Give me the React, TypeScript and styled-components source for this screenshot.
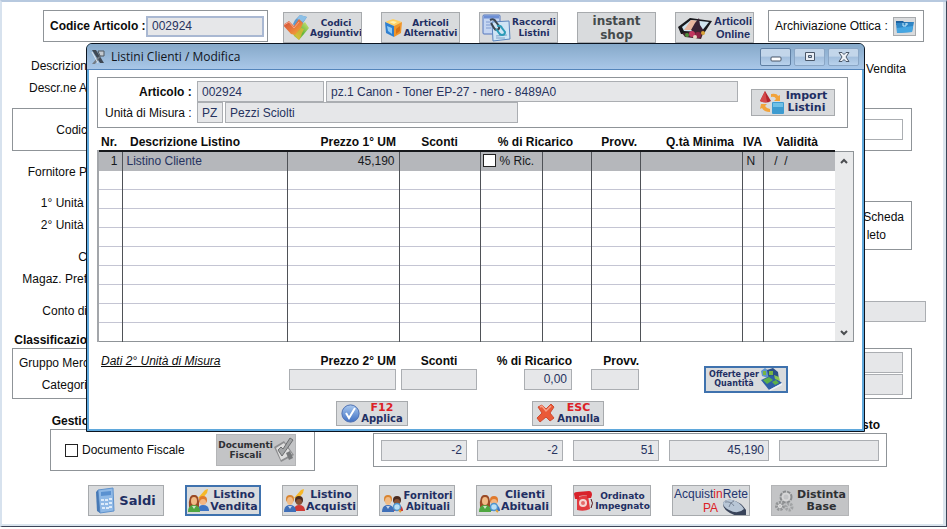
import React from "react";
import styled, { createGlobalStyle, css } from "styled-components";

const GlobalStyle = createGlobalStyle`
  * { box-sizing: border-box; }
  body {
    margin: 0;
    background: #fff;
    color: #0c0c0c;
    font: 12px/16px "Liberation Sans", Arial, sans-serif;
  }
  button, input { font: inherit; color: inherit; }
`;

/* ---------- shared parts ---------- */

const Frame = styled.main`
  position: relative;
  background: #fff;
  border-style: solid;
  border-width: 2px 1px 1px 2px;
  border-color: #b7c9df #3c4558 #3c4558 #d7e2ee;
  box-shadow: inset -3px -2px 0 #dbe5ee;
  overflow: hidden;
`;

const Field = styled.input<{ $w?: number; $grow?: boolean; $right?: boolean; $white?: boolean; $focus?: boolean }>`
  width: ${(p) => (p.$w ? `${p.$w}px` : "auto")};
  flex: ${(p) => (p.$grow ? "1 1 0" : "none")};
  min-width: 0;
  height: 21px;
  padding: 0 4px;
  border: ${(p) => (p.$focus ? "2px solid #a9b8d2" : "1px solid #abaeb2")};
  border-radius: 0;
  background: ${(p) => (p.$white ? "#fff" : "#e6e7e9")};
  color: #26335f;
  text-align: ${(p) => (p.$right ? "right" : "left")};
  outline: none;
`;

const Tick = styled.input`
  appearance: none;
  flex: none;
  width: 13px;
  height: 13px;
  margin: 0;
  border: 1px solid #222;
  background: #fff;
`;

const Panel = styled.div`
  border: 1px solid #8f9498;
`;

const Strong = styled.strong`
  font-weight: bold;
  white-space: nowrap;
`;

/* ---------- picture buttons ---------- */

const PictureButton = styled.button<{ $w: number; $h?: number; $tone?: "active" | "off" }>`
  display: flex;
  flex: none;
  align-items: center;
  justify-content: center;
  gap: 1px;
  width: ${(p) => p.$w}px;
  height: ${(p) => p.$h ?? 31}px;
  padding: 0;
  border: 1px solid #a7aaad;
  background: #d9dbdd;
  color: #1f2f63;
  overflow: hidden;
  white-space: nowrap;
  ${(p) => p.$tone === "active" && css`border: 2px solid #3f72ae;`}
  ${(p) => p.$tone === "off" && css`background: #c3c4c6; border-color: #b4b5b7; color: #2e3034;`}
  svg { flex: none; display: block; }
`;

const Caption = styled.span<{ $size: number; $lh?: number; $arial?: boolean }>`
  display: flex;
  flex-direction: column;
  align-items: center;
  font: bold ${(p) => p.$size}px/${(p) => p.$lh ?? p.$size + 1}px
    ${(p) => (p.$arial ? `"Liberation Sans", Arial` : `"DejaVu Sans", Verdana`)}, sans-serif;
`;

const Red = styled.span<{ $size?: number }>`
  color: #dc2127;
  font-size: ${(p) => (p.$size ? `${p.$size}px` : "inherit")};
`;

const ShopCaption = styled(Caption)`
  color: #454b4c;
`;

const SaldiLabel = styled(Caption)`
  padding-left: 3px;
`;

const RetePA = styled.span`
  display: flex;
  flex-direction: column;
  align-items: center;
  font: 12px/14px "Liberation Sans", Arial, sans-serif;
  color: #23356f;
`;

const ReteLine = styled.span`
  display: flex;
  align-items: center;
  gap: 4px;
  height: 14px;
  padding-left: 28px;
`;

/* ---------- icons ---------- */

const ChecksIcon = () => (
  <svg width="26" height="27" viewBox="0 0 26 27" aria-hidden="true">
    <defs>
      <linearGradient id="ck1" x1="0" y1="0" x2="1" y2="1">
        <stop offset="0" stopColor="#c74a3c" /><stop offset=".5" stopColor="#e8743c" /><stop offset="1" stopColor="#f2b632" />
      </linearGradient>
      <linearGradient id="ck2" x1="1" y1="0" x2="0" y2="1">
        <stop offset="0" stopColor="#d6e67a" /><stop offset=".5" stopColor="#62b53b" /><stop offset="1" stopColor="#e0d23a" />
      </linearGradient>
    </defs>
    <path d="M12 6 L17 1 L24 3 L20 9 L22 12 L14 16 L10 10Z" fill="#5b9bd0" />
    <path d="M17 1 L24 3 L20 8 L14 5Z" fill="#8dc0e6" />
    <path d="M8 14 L14 15 L22 8 L26 14 L16 26 L11 22Z" fill="url(#ck2)" />
    <path d="M0 11 L6 7 L11 12 L16 5 L20 9 L18 14 L12 21 L8 20Z" fill="url(#ck1)" />
    <path d="M1 11 L6 8 L11 14 L16 8" fill="none" stroke="#f4a68a" strokeWidth="1" />
    <path d="M12 21 L18 14 L21 15 L16 26Z" fill="#f0b632" opacity=".7" />
  </svg>
);

const CubeIcon = () => (
  <svg width="19" height="20" viewBox="0 0 19 20" aria-hidden="true">
    <path d="M1 4 L9 1 L18 4 L10 8Z" fill="#ffcf62" />
    <path d="M1 4 L10 8 L10 19 L2 15Z" fill="#2f7fd0" />
    <path d="M10 8 L18 4 L17 15 L10 19Z" fill="#f0962a" />
    <path d="M3 8 L8 10 L8 16 L4 13Z" fill="#8fcbf5" />
    <path d="M12 11 L16 8 L16 13 L12 16Z" fill="#d97316" />
    <path d="M5 4 L9 3 L13 4 L10 6Z" fill="#fff0b0" />
  </svg>
);

const LinkPagesIcon = () => (
  <svg width="30" height="28" viewBox="0 0 30 28" aria-hidden="true">
    <rect x="2" y="1" width="17" height="19" rx="1" fill="#c5d6f2" stroke="#5476bd" />
    <path d="M3 3h15" stroke="#6d8fd4" strokeWidth="3" />
    <path d="M5 8h5M5 11h5M5 14h5" stroke="#7f9ad0" />
    <path d="M11 8 L28 7 L29 25 L12 27Z" fill="#cfe5f5" stroke="#5b86bf" />
    <path d="M15 22 L26 21 M15 24h9" stroke="#7fa3c9" />
    <path d="M9 6 q4-2 6 2 l3 4 q1 3-2 4 q-2 0-3-2 l-3-5" fill="none" stroke="#3b4550" strokeWidth="2" />
    <path d="M16 12 q4-1 5 2 l3 4 q0 3-3 3 q-2 0-3-2 l-3-4" fill="none" stroke="#2c9cb8" strokeWidth="2" />
  </svg>
);

const TabletIcon = () => (
  <svg width="36" height="24" viewBox="0 0 36 24" aria-hidden="true">
    <path d="M1 11 L13 2 L35 5 L26 19 L4 18Z" fill="#17181c" />
    <path d="M5 11 L14 4 L32 6 L24 16 L7 15Z" fill="#cfe3ee" />
    <path d="M14 4 L22 5 L18 14 L7 14Z" fill="#e9b59e" />
    <path d="M18 7 L22 2 L23 9 L27 15 L20 19 L14 14Z" fill="#3a2234" />
    <path d="M5 17 L27 15 L24 23 L8 21Z" fill="#46252e" />
    <circle cx="15" cy="18" r="3" fill="#c2355f" />
    <circle cx="21" cy="19" r="3" fill="#8e2245" />
    <circle cx="10" cy="19" r="2" fill="#4f8f3c" />
    <circle cx="26" cy="17" r="2" fill="#d8a33b" />
    <circle cx="18" cy="21" r="2" fill="#e7d7c4" />
  </svg>
);

const FolderIcon = () => (
  <svg width="18" height="13" viewBox="0 0 18 13" aria-hidden="true">
    <path d="M0 1h7l1 1h9v3H0Z" fill="#1d5f9c" />
    <path d="M0 3 L18 2 L16 12 L1 13Z" fill="#2f86c6" />
    <path d="M1 8 L17 6 L16 12 L1 13Z" fill="#45a6e2" />
    <path d="M7 3v3h3V3M11 3v2" stroke="#c9ebfb" strokeWidth="1" fill="none" />
  </svg>
);

const ShapesIcon = () => (
  <svg width="26" height="24" viewBox="0 0 26 24" aria-hidden="true">
    <path d="M6 1 L12 11 Q7 14 1 11Z" fill="#b3242c" />
    <path d="M6 1 L8 12 Q4 13 1 11Z" fill="#d4484a" />
    <path d="M12 4 q6-1 7 2 l2-1 v6 h-6 l2-2 q-1-3-5-2Z" fill="#f2a33a" />
    <path d="M2 14 l6 0 -2 2 q2 3 5 3 v3 q-6 0-8-4 l-2 1Z" fill="#f2a33a" />
    <rect x="13" y="12" width="12" height="12" rx="1" fill="#3d9bd0" />
    <rect x="14" y="13" width="10" height="4" fill="#6fc0e6" />
  </svg>
);

const OfferIcon = () => (
  <svg width="23" height="23" viewBox="0 0 23 23" aria-hidden="true">
    <path d="M1 3 L5 0 L9 3 L8 10 L2 8Z" fill="#5e95cd" />
    <path d="M7 2 L13 0 L18 4 L19 12 L9 12Z" fill="#2a4f86" />
    <path d="M1 12 L12 7 L22 15 L9 22Z" fill="#2e5fa6" />
    <path d="M9 3h4v4H9ZM3 3h3v4H3Z" fill="#77b543" />
    <path d="M3 12 l6-3 4 3-6 4Z" fill="#5cb04a" />
    <path d="M14 7 l5 2 1 4-5-2Z" fill="#8ac653" />
    <path d="M12 14 l4-2 3 3-4 2Z" fill="#5cb04a" />
    <path d="M9 22 L22 15 v2 L10 23Z" fill="#eef3f8" />
  </svg>
);

const OkIcon = () => (
  <svg width="19" height="19" viewBox="0 0 19 19" aria-hidden="true">
    <defs>
      <linearGradient id="ok" x1="0" y1="0" x2="0" y2="1">
        <stop offset="0" stopColor="#a9c9f0" /><stop offset="1" stopColor="#3f6fc2" />
      </linearGradient>
    </defs>
    <circle cx="9.5" cy="9.5" r="8.6" fill="url(#ok)" stroke="#4d70b4" />
    <path d="M5 9 L8 14 L14 4" fill="none" stroke="#fff" strokeWidth="2" />
  </svg>
);

const CrossIcon = () => (
  <svg width="20" height="20" viewBox="0 0 20 20" aria-hidden="true">
    <path d="M2 4 L6 2 L10 6 L15 1 L18 4 L14 10 L18 15 L14 18 L10 14 L4 19 L1 15 L6 10Z" fill="#ea5a38" stroke="#cf4a30" />
    <path d="M4 4 L6 3 L10 8 L15 3" fill="none" stroke="#f7a088" strokeWidth="1.5" />
  </svg>
);

const StampIcon = () => (
  <svg width="20" height="26" viewBox="0 0 20 26" aria-hidden="true">
    <path d="M0 10 L10 4 L20 18 L7 25Z" fill="#8d8e90" />
    <path d="M2 11 L10 6 L18 17 L7 23Z" fill="#dedede" />
    <path d="M4 13 L8 19 L19 3 L16 1 L9 12 L7 10Z" fill="#a3a5a7" stroke="#6c6e70" />
    <path d="M12 16 l4-2 3 7 -4 2Z" fill="#77797b" />
  </svg>
);

const CalculatorIcon = () => (
  <svg width="19" height="27" viewBox="0 0 19 27" aria-hidden="true">
    <path d="M2 3 L17 1 L18 24 L4 26Z" fill="#8fb9e6" stroke="#5f92cc" />
    <path d="M2 3 L4 26 L1 24 L0 5Z" fill="#4779b5" />
    <path d="M5 5 L15 4 L15 8 L5 9Z" fill="#5a91d0" />
    <g fill="#dcebfa">
      <rect x="5" y="12" width="3" height="2" /><rect x="9" y="12" width="3" height="2" /><rect x="13" y="11" width="3" height="2" />
      <rect x="5" y="16" width="3" height="2" /><rect x="9" y="16" width="3" height="2" /><rect x="13" y="15" width="3" height="2" />
      <rect x="6" y="20" width="3" height="2" /><rect x="10" y="20" width="3" height="2" /><rect x="13" y="19" width="3" height="2" />
    </g>
  </svg>
);

type PeopleProps = { woman?: boolean; extra: "pencil" | "lens" };

const PeopleIcon = ({ woman, extra }: PeopleProps) => {
  const hair = woman ? "#9a4a26" : "#d98430";
  const body = woman ? "#4fa640" : "#3f6fb8";
  const hair2 = woman ? "#e07a2d" : "#4a2b20";
  const body2 = woman ? "#3d74c4" : "#cf3a35";
  const skin2 = woman ? "#f3b682" : "#8a5334";
  return (
    <svg width="21" height="24" viewBox="0 0 21 24" aria-hidden="true">
      {extra === "pencil" && <path d="M10 9 L17 1 L20 0 L19 4 L14 10Z" fill="#f6b829" />}
      <path d="M10 22 q0-6 5-6 q6 0 6 6Z" fill={body2} />
      <circle cx="15" cy="11" r="4" fill={hair2} />
      <ellipse cx="15" cy="13" rx="3" ry="3" fill={skin2} />
      {woman && <path d="M1 18 Q0 6 6 6 Q12 6 11 18Z" fill={hair} />}
      <path d="M0 23 q0-7 6-7 q6 0 6 7Z" fill={body} />
      <circle cx="6" cy="10" r="4" fill={hair} />
      <ellipse cx="6" cy="12" rx="3" ry="4" fill="#f1bb85" />
      <path d="M4 17 l2 3 2-3" fill="#fff" opacity=".7" />
      {extra === "lens" && (
        <>
          <circle cx="15" cy="18" r="3.5" fill="#b9dff5" stroke="#4d94cf" strokeWidth="1.5" />
          <path d="M17 21 l2 2" stroke="#e0a33b" strokeWidth="2" />
        </>
      )}
    </svg>
  );
};

const PhoneIcon = () => (
  <svg width="20" height="22" viewBox="0 0 20 22" aria-hidden="true">
    <path d="M3 7 L14 5 L16 19 Q10 22 3 20Z" fill="#e23a3f" />
    <path d="M0 4 Q0 2 3 2 L15 1 Q18 1 18 5 L17 8 L13 8 L13 5 L5 6 L5 9 L1 9Z" fill="#d8222b" />
    <circle cx="9" cy="13" r="4" fill="#f5d6d4" />
    <circle cx="9" cy="13" r="2" fill="#e46a6a" />
    <path d="M17 9 q3 4 0 9" fill="none" stroke="#5c1a1d" />
  </svg>
);

const MouseIcon = () => (
  <svg width="25" height="18" viewBox="0 0 25 18" aria-hidden="true">
    <path d="M1 5 Q2 0 10 1 Q19 3 24 11 L24 17 Q12 18 5 12 Q1 9 1 5Z" fill="#39445a" />
    <path d="M1 4 Q3 0 10 1 Q18 3 22 10 Q16 16 7 11 Q1 8 1 4Z" fill="#b8c6d6" />
    <path d="M3 3 Q9 2 12 7 M12 2 Q8 3 7 8" fill="none" stroke="#7b8798" />
  </svg>
);

const GearsIcon = () => (
  <svg width="22" height="22" viewBox="0 0 22 22" aria-hidden="true" fill="none">
    <circle cx="12" cy="7" r="5" stroke="#898b8d" strokeWidth="3" strokeDasharray="3 1" />
    <circle cx="12" cy="7" r="3.5" stroke="#d6d6d7" strokeWidth="2" />
    <circle cx="6" cy="16" r="3.5" stroke="#929496" strokeWidth="3" strokeDasharray="2 1" />
    <circle cx="15" cy="17" r="3" stroke="#a1a3a5" strokeWidth="3" strokeDasharray="2 1" />
    <circle cx="6" cy="16" r="1.5" stroke="#dedede" />
  </svg>
);

const AppIcon = () => (
  <svg width="15" height="16" viewBox="0 0 15 16" aria-hidden="true">
    <path d="M1 1h4l8 13h-4Z" fill="#3f4854" />
    <path d="M10 7 L4 15 H1 L7 8Z" fill="#737c86" />
    <path d="M7 2h6v5H9Z" fill="#c2c9d0" stroke="#4e5863" />
    <path d="M1 3l6 11" stroke="#dfe5ea" />
  </svg>
);

const MinIcon = () => (
  <svg width="12" height="12" viewBox="0 0 12 12" aria-hidden="true">
    <rect x="1" y="6" width="10" height="4" rx="1" fill="#fff" stroke="#4a5768" />
  </svg>
);
const MaxIcon = () => (
  <svg width="12" height="12" viewBox="0 0 12 12" aria-hidden="true">
    <path d="M1.5 1.5h9v8h-9Z M4.5 4.5h3v2h-3Z" fill="#e9eef5" fillRule="evenodd" stroke="#4a5768" />
  </svg>
);
const CloseIcon = () => (
  <svg width="12" height="12" viewBox="0 0 12 12" aria-hidden="true">
    <path d="M1 1.5h3l2 2 2-2h3L8 6l3 4.5H8L6 8.5 4 10.5H1L4 6Z" fill="#eef2f7" stroke="#4a5768" />
  </svg>
);
const Chevron = ({ down }: { down?: boolean }) => (
  <svg width="8" height="6" viewBox="0 0 8 6" aria-hidden="true">
    <path d={down ? "M1 1l3 3 3-3" : "M1 5l3-3 3 3"} fill="none" stroke="#4b4d50" strokeWidth="2" />
  </svg>
);

/* ---------- article form ---------- */

const TopRow = styled.header`
  display: flex;
  align-items: flex-start;
  padding: 8px 22px 0 41px;
`;

const CodePanel = styled(Panel)`
  display: flex;
  align-items: center;
  justify-content: space-between;
  width: 225px;
  height: 32px;
  padding: 0 3px 0 6px;
`;

const TopButtons = styled.div`
  display: flex;
  flex: 1;
  justify-content: space-between;
  margin: 2px 14px 0 15px;
`;

const ArchivePanel = styled(Panel)`
  display: flex;
  align-items: center;
  justify-content: space-between;
  width: 156px;
  height: 32px;
  padding: 0 7px 0 6px;
`;

const Line = styled.div<{ $top?: number; $right?: number }>`
  display: flex;
  align-items: center;
  justify-content: space-between;
  height: 22px;
  margin-top: ${(p) => p.$top ?? 0}px;
  padding-right: ${(p) => p.$right ?? 0}px;
`;

const Label = styled.label<{ $w?: number; $bold?: boolean }>`
  flex: none;
  width: ${(p) => p.$w ?? 85}px;
  overflow: hidden;
  white-space: pre;
  text-align: right;
  font-weight: ${(p) => (p.$bold ? "bold" : "normal")};
`;

const LowText = styled.span`
  align-self: flex-end;
`;

const WidePanel = styled(Panel)<{ $top?: number }>`
  display: flex;
  flex-direction: column;
  gap: 1px;
  margin: ${(p) => p.$top ?? 0}px 34px 0 10px;
  padding: 3px 8px 3px 0;
`;

const PanelLine = styled.div<{ $tall?: boolean }>`
  display: flex;
  align-items: center;
  justify-content: space-between;
  padding: ${(p) => (p.$tall ? "7px 0" : "0")};
`;

const Split = styled.div`
  display: flex;
  align-items: flex-start;
  justify-content: space-between;
  margin-top: 9px;
  padding-right: 34px;
`;

const LabelStack = styled.div`
  display: flex;
  flex-direction: column;
  line-height: 22px;
`;

const Spacer = styled.div`
  height: 10px;
`;

const CardPanel = styled(Panel)`
  display: flex;
  flex-direction: column;
  margin-top: 9px;
  padding: 6px 7px 5px 0;
  border-left: 0;
  line-height: 18px;
  white-space: pre;
`;

const Heading = styled.div<{ $top?: number }>`
  display: flex;
  margin-top: ${(p) => p.$top ?? 0}px;
  line-height: 15px;
`;

const TaxRow = styled.div`
  display: flex;
  align-items: flex-start;
  gap: 58px;
  margin-top: 15px;
  padding: 0 59px 0 48px;
`;

const TaxBlock = styled.div`
  width: 265px;
  line-height: 15px;
`;

const TaxPanel = styled(Panel)`
  display: flex;
  align-items: center;
  justify-content: space-between;
  height: 42px;
  padding: 0 18px 0 14px;
`;

const CheckLabel = styled.label`
  display: flex;
  align-items: center;
  gap: 4px;
`;

const TotalsBlock = styled.div`
  flex: 1;
  margin-top: 4px;
  line-height: 15px;
  text-align: right;
`;

const TotalsPanel = styled(Panel)`
  display: flex;
  align-items: center;
  gap: 10px;
  height: 34px;
  padding: 0 7px;
`;

const TotalsTitle = styled.div`
  padding-right: 7px;
`;

const BottomRow = styled.footer`
  display: flex;
  gap: 21px;
  padding: 14px 0 10px 86px;
`;

/* ---------- dialog ---------- */

const Dialog = styled.section`
  position: absolute;
  top: 41px;
  left: 84px;
  right: 81px;
  border: 1px solid #0b1420;
  border-radius: 6px 6px 0 0;
  background: #5fa8dc;
  padding: 0 2px 2px;
  overflow: hidden;
`;

const TitleBar = styled.div`
  display: flex;
  align-items: center;
  gap: 5px;
  height: 26px;
  margin: 0 -2px;
  padding: 0 5px 0 4px;
  border-bottom: 1px solid #5485bb;
  background: linear-gradient(#86a9c9, #a9c7e8);
  color: #10151c;
`;

const Title = styled.h1`
  flex: 1;
  margin: 0;
  font: normal 12px/18px "Open Sans", "Noto Sans", sans-serif;
`;

const WindowButton = styled.button<{ $strong?: boolean }>`
  display: grid;
  place-items: center;
  width: 31px;
  height: 18px;
  padding: 0;
  border: 1px solid ${(p) => (p.$strong ? "#5f7fa3" : "#8aa6c5")};
  border-radius: 2px;
  background: linear-gradient(#c3d6ea 45%, #a3bfdd 50%, #b9d2ec);
`;

const WindowButtons = styled.div`
  display: flex;
  gap: 3px;
`;

const DialogBody = styled.div`
  padding: 7px 8px 3px;
  background: #fff;
`;

const ArticlePanel = styled(Panel)`
  display: flex;
  align-items: center;
  gap: 13px;
  margin-right: 6px;
  padding: 3px 12px 4px 3px;
`;

const ArticleLines = styled.div`
  flex: 1;
`;

const ArticleLine = styled.div`
  display: flex;
  align-items: center;
  gap: 2px;
`;

const ListArea = styled.div`
  display: flex;
  margin-top: 5px;
`;

const Table = styled.table`
  flex: 1;
  width: 0;
  table-layout: fixed;
  border-collapse: collapse;
`;

const HeadCell = styled.th<{ $align?: string; $pad?: string }>`
  height: 18px;
  padding: ${(p) => p.$pad ?? "0"};
  text-align: ${(p) => p.$align ?? "center"};
  font-weight: bold;
  line-height: 16px;
  white-space: nowrap;
`;

const Row = styled.tr<{ $selected?: boolean }>`
  height: 19px;
  background: ${(p) => (p.$selected ? "#b5b7bb" : "#fff")};
  border-bottom: 1px solid #c4c5d3;
  &:first-child { border-top: 2px solid #16181b; border-bottom-color: #b5b7bb; }
  &:last-child { border-bottom-color: #8f9498; }
`;

const Cell = styled.td<{ $align?: string }>`
  padding: 0 4px;
  border-right: 1px solid #4f5257;
  text-align: ${(p) => p.$align ?? "left"};
  line-height: 16px;
  white-space: pre;
  color: #17191d;
  &:first-child { border-left: 2px solid #a3a6aa; }
  &:last-child { border-right: 0; }
`;

const ItemName = styled.span`
  color: #26335f;
`;

const RicLabel = styled.label`
  display: flex;
  align-items: center;
  gap: 4px;
  margin-left: -2px;
`;

const ScrollBar = styled.div`
  display: flex;
  flex-direction: column;
  align-items: center;
  justify-content: space-between;
  width: 19px;
  margin-top: 18px;
  padding: 6px 0 5px;
  border: 1px solid #8f9498;
  border-left: 0;
  background: #e9eaeb;
`;

const SecondUnit = styled.div`
  display: grid;
  grid-template-columns: 187px 107px 76px 90px 62px auto;
  column-gap: 5px;
  margin-top: 11px;
`;

const SecondTitle = styled.em`
  padding-left: 4px;
  font-style: italic;
  text-decoration: underline;
`;

const Stack = styled.label<{ $align?: string }>`
  display: flex;
  flex-direction: column;
  align-items: ${(p) => p.$align ?? "flex-end"};
  font-weight: bold;
  input { font-weight: normal; }
`;

const OfferSlot = styled.div`
  display: flex;
  align-items: flex-end;
  margin: 0 0 -3px 60px;
`;

const Actions = styled.div`
  display: flex;
  gap: 124px;
  padding: 11px 0 0 239px;
`;

const columns = [24, 165, 112, 81, 62, 49, 49, 102, 21];
const emptyRows = Array.from({ length: 9 }, (_, i) => i);
const totals = [
  { w: 86, v: "-2" },
  { w: 86, v: "-2" },
  { w: 86, v: "51" },
  { w: 100, v: "45,190" },
  { w: 100, v: "" },
];

const PriceListDialog = () => (
  <Dialog role="dialog" aria-labelledby="dlg-title">
    <TitleBar>
      <AppIcon />
      <Title id="dlg-title">Listini Clienti / Modifica</Title>
      <WindowButtons>
        <WindowButton $strong aria-label="Riduci"><MinIcon /></WindowButton>
        <WindowButton aria-label="Ingrandisci"><MaxIcon /></WindowButton>
        <WindowButton aria-label="Chiudi"><CloseIcon /></WindowButton>
      </WindowButtons>
    </TitleBar>
    <DialogBody>
      <ArticlePanel>
        <ArticleLines>
          <ArticleLine>
            <Label $w={94} $bold htmlFor="art">Articolo : </Label>
            <Field id="art" $w={127} readOnly defaultValue="002924" />
            <Field aria-label="Descrizione articolo" $grow readOnly defaultValue="pz.1 Canon - Toner EP-27 - nero - 8489A0" />
          </ArticleLine>
          <ArticleLine>
            <Label $w={94} htmlFor="um">Unità di Misura : </Label>
            <Field id="um" $w={26} readOnly defaultValue="PZ" />
            <Field aria-label="Descrizione unità" $w={293} readOnly defaultValue="Pezzi Sciolti" />
          </ArticleLine>
        </ArticleLines>
        <PictureButton $w={84} $h={27}>
          <ShapesIcon />
          <Caption $size={11}><span>Import</span><span>Listini</span></Caption>
        </PictureButton>
      </ArticlePanel>

      <ListArea>
        <Table>
          <colgroup>
            {columns.map((w, i) => <col key={i} width={w} />)}
            <col />
          </colgroup>
          <thead>
            <tr>
              <HeadCell $align="left" $pad="0 0 0 3px">Nr.</HeadCell>
              <HeadCell $align="left" $pad="0 0 0 8px">Descrizione Listino</HeadCell>
              <HeadCell $align="right" $pad="0 3px 0 0">Prezzo 1° UM</HeadCell>
              <HeadCell>Sconti</HeadCell>
              <HeadCell colSpan={2}>% di Ricarico</HeadCell>
              <HeadCell $align="right" $pad="0 3px 0 0">Provv.</HeadCell>
              <HeadCell $align="right" $pad="0 8px 0 0">Q.tà Minima</HeadCell>
              <HeadCell>IVA</HeadCell>
              <HeadCell $pad="0 4px 0 0">Validità</HeadCell>
            </tr>
          </thead>
          <tbody>
            <Row $selected>
              <Cell $align="right">1</Cell>
              <Cell><ItemName>Listino Cliente</ItemName></Cell>
              <Cell $align="right">45,190</Cell>
              <Cell />
              <Cell><RicLabel><Tick type="checkbox" />% Ric.</RicLabel></Cell>
              <Cell />
              <Cell />
              <Cell />
              <Cell>N</Cell>
              <Cell>{"  /  /"}</Cell>
            </Row>
            {emptyRows.map((r) => (
              <Row key={r}>
                {columns.map((_, c) => <Cell key={c} />)}
                <Cell />
              </Row>
            ))}
          </tbody>
        </Table>
        <ScrollBar><Chevron /><Chevron down /></ScrollBar>
      </ListArea>

      <SecondUnit>
        <SecondTitle>Dati 2° Unità di Misura</SecondTitle>
        <Stack>Prezzo 2° UM<Field $w={107} readOnly /></Stack>
        <Stack $align="center">Sconti<Field $w={76} readOnly /></Stack>
        <Stack>% di Ricarico<Field $w={48} $right readOnly defaultValue="0,00" /></Stack>
        <Stack>Provv.<Field $w={48} readOnly /></Stack>
        <OfferSlot>
          <PictureButton $w={84} $h={27} $tone="active">
            <Caption $size={8}><span>Offerte per</span><span>Quantità</span></Caption>
            <OfferIcon />
          </PictureButton>
        </OfferSlot>
      </SecondUnit>

      <Actions>
        <PictureButton $w={72} $h={25}>
          <OkIcon />
          <Caption $size={10} $lh={11}><Red $size={11}>F12</Red><span>Applica</span></Caption>
        </PictureButton>
        <PictureButton $w={72} $h={25}>
          <CrossIcon />
          <Caption $size={10} $lh={11}><Red $size={11}>ESC</Red><span>Annulla</span></Caption>
        </PictureButton>
      </Actions>
    </DialogBody>
  </Dialog>
);

export default function App() {
  return (
    <>
      <GlobalStyle />
      <Frame>
        <TopRow>
          <CodePanel>
            <Strong as="label" htmlFor="code">Codice Articolo :</Strong>
            <Field id="code" $w={118} $focus readOnly defaultValue="002924" />
          </CodePanel>
          <TopButtons>
            <PictureButton $w={79}>
              <ChecksIcon />
              <Caption $size={9}><span>Codici</span><span>Aggiuntivi</span></Caption>
            </PictureButton>
            <PictureButton $w={79}>
              <CubeIcon />
              <Caption $size={9}><span>Articoli</span><span>Alternativi</span></Caption>
            </PictureButton>
            <PictureButton $w={79}>
              <LinkPagesIcon />
              <Caption $size={9} $lh={11}><span>Raccordi</span><span>Listini</span></Caption>
            </PictureButton>
            <PictureButton $w={79}>
              <ShopCaption $size={12} $lh={14}><span>instant</span><span>shop</span></ShopCaption>
            </PictureButton>
            <PictureButton $w={79}>
              <TabletIcon />
              <Caption $size={11} $lh={13} $arial><span>Articoli</span><span>Online</span></Caption>
            </PictureButton>
          </TopButtons>
          <ArchivePanel>
            <span>Archiviazione Ottica :</span>
            <PictureButton $w={23} $h={19} aria-label="Archiviazione Ottica"><FolderIcon /></PictureButton>
          </ArchivePanel>
        </TopRow>

        <Line $top={12} $right={40}><Label>Descrizion</Label><LowText>Vendita</LowText></Line>
        <Line><Label>Descr.ne A</Label></Line>

        <WidePanel $top={9}>
          <PanelLine $tall>
            <Label $w={74} htmlFor="cod">Codic</Label>
            <Field id="cod" $w={60} $white readOnly />
          </PanelLine>
        </WidePanel>

        <Line $top={10}><Label>Fornitore P</Label></Line>

        <Split>
          <LabelStack>
            <Label>{"1° Unità "}</Label>
            <Label>{"2° Unità "}</Label>
            <Spacer />
            <Label>C</Label>
            <Label>Magaz. Pref</Label>
          </LabelStack>
          <CardPanel><span>Scheda</span><span>{" leto"}</span></CardPanel>
        </Split>

        <Line $top={10} $right={20}>
          <Label htmlFor="conto">Conto di</Label>
          <Field id="conto" $w={80} readOnly />
        </Line>

        <Heading $top={11}><Label $bold>Classificazio</Label></Heading>
        <WidePanel>
          <PanelLine><Label $w={76} htmlFor="gruppo">Gruppo Merc</Label><Field id="gruppo" $w={60} readOnly /></PanelLine>
          <PanelLine><Label $w={74} htmlFor="cat">Categori</Label><Field id="cat" $w={60} readOnly /></PanelLine>
        </WidePanel>

        <TaxRow>
          <TaxBlock>
            <Label as="div" $w={39} $bold>Gestio</Label>
            <TaxPanel>
              <CheckLabel><Tick type="checkbox" />Documento Fiscale</CheckLabel>
              <PictureButton $w={80} $h={32} $tone="off">
                <Caption $size={9}><span>Documenti</span><span>Fiscali</span></Caption>
                <StampIcon />
              </PictureButton>
            </TaxPanel>
          </TaxBlock>
          <TotalsBlock>
            <TotalsTitle><Strong>sto</Strong></TotalsTitle>
            <TotalsPanel>
              {totals.map((t, i) => (
                <Field key={i} $w={t.w} $right readOnly defaultValue={t.v} aria-label={`Totale ${i + 1}`} />
              ))}
            </TotalsPanel>
          </TotalsBlock>
        </TaxRow>

        <BottomRow>
          <PictureButton $w={76}>
            <CalculatorIcon />
            <SaldiLabel $size={13} $lh={18}>Saldi</SaldiLabel>
          </PictureButton>
          <PictureButton $w={76} $tone="active">
            <PeopleIcon woman extra="pencil" />
            <Caption $size={11}><span>Listino</span><span>Vendita</span></Caption>
          </PictureButton>
          <PictureButton $w={76}>
            <PeopleIcon extra="pencil" />
            <Caption $size={11}><span>Listino</span><span>Acquisti</span></Caption>
          </PictureButton>
          <PictureButton $w={76}>
            <PeopleIcon extra="lens" />
            <Caption $size={10}><span>Fornitori</span><span>Abituali</span></Caption>
          </PictureButton>
          <PictureButton $w={76}>
            <PeopleIcon woman extra="lens" />
            <Caption $size={11}><span>Clienti</span><span>Abituali</span></Caption>
          </PictureButton>
          <PictureButton $w={78}>
            <PhoneIcon />
            <Caption $size={9}><span>Ordinato</span><span>Impegnato</span></Caption>
          </PictureButton>
          <PictureButton $w={78}>
            <RetePA>
              <span>Acquist<Red>in</Red>Rete</span>
              <ReteLine><Red>PA</Red><MouseIcon /></ReteLine>
            </RetePA>
          </PictureButton>
          <PictureButton $w={78} $tone="off">
            <GearsIcon />
            <Caption $size={11}><span>Distinta</span><span>Base</span></Caption>
          </PictureButton>
        </BottomRow>

        <PriceListDialog />
      </Frame>
    </>
  );
}
